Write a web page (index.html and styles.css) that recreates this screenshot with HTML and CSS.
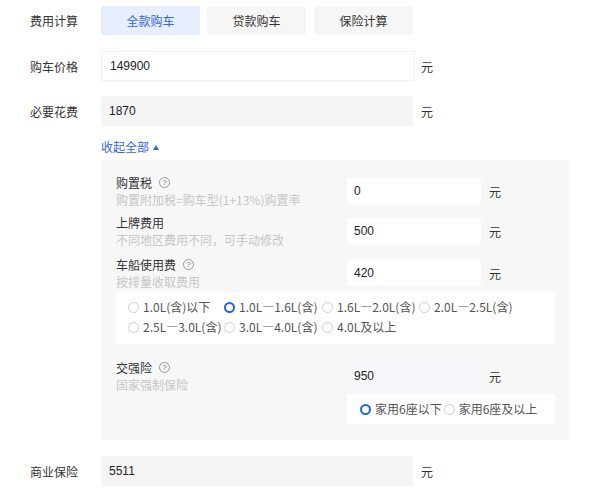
FILE: index.html
```html
<!DOCTYPE html>
<html lang="zh">
<head>
<meta charset="utf-8">
<title>费用计算</title>
<link rel="stylesheet" href="styles.css">
</head>
<body>
<div class="calc">
  <div class="row row-tabs">
    <div class="label">费用计算</div>
    <div class="tabs">
      <div class="tab active">全款购车</div>
      <div class="tab">贷款购车</div>
      <div class="tab tab-last">保险计算</div>
    </div>
  </div>

  <div class="row row-price">
    <div class="label">购车价格</div>
    <div class="field field-white">149900</div>
    <div class="unit">元</div>
  </div>

  <div class="row">
    <div class="label">必要花费</div>
    <div class="field field-grey">1870</div>
    <div class="unit">元</div>
  </div>

  <div class="toggle">收起全部<span class="tri"></span></div>

  <div class="panel">
    <div class="item">
      <div class="desc">
        <div class="title">购置税<span class="help">?</span></div>
        <div class="sub">购置附加税=购车型(1+13%)购置率</div>
      </div>
      <div class="box">0</div>
      <div class="unit">元</div>
    </div>

    <div class="item item-2">
      <div class="desc">
        <div class="title">上牌费用</div>
        <div class="sub">不同地区费用不同，可手动修改</div>
      </div>
      <div class="box">500</div>
      <div class="unit">元</div>
    </div>

    <div class="item item-3">
      <div class="desc">
        <div class="title">车船使用费<span class="help">?</span></div>
        <div class="sub">按排量收取费用</div>
      </div>
      <div class="box">420</div>
      <div class="unit">元</div>
    </div>

    <div class="radios radios-engine">
      <div class="radio"><span class="dot"></span>1.0L(含)以下</div>
      <div class="radio"><span class="dot on"></span>1.0L—1.6L(含)</div>
      <div class="radio"><span class="dot"></span>1.6L—2.0L(含)</div>
      <div class="radio"><span class="dot"></span>2.0L—2.5L(含)</div>
      <div class="radio"><span class="dot"></span>2.5L—3.0L(含)</div>
      <div class="radio"><span class="dot"></span>3.0L—4.0L(含)</div>
      <div class="radio"><span class="dot"></span>4.0L及以上</div>
    </div>

    <div class="item item-4">
      <div class="desc">
        <div class="title">交强险<span class="help">?</span></div>
        <div class="sub">国家强制保险</div>
      </div>
      <div class="col">
        <div class="inline">
          <div class="box box-off">950</div>
          <div class="unit">元</div>
        </div>
        <div class="radios radios-seat">
          <div class="radio"><span class="dot on"></span>家用6座以下</div>
          <div class="radio"><span class="dot"></span>家用6座及以上</div>
        </div>
      </div>
    </div>
  </div>

  <div class="row row-last">
    <div class="label">商业保险</div>
    <div class="field field-grey">5511</div>
    <div class="unit">元</div>
  </div>
</div>
</body>
</html>
```

FILE: styles.css
```css
* { box-sizing: border-box; }

html, body {
  margin: 0;
  padding: 0;
  background: #ffffff;
}

body {
  font-family: "Noto Sans CJK SC", "Noto Sans", sans-serif;
  font-size: 12px;
  color: #333333;
  width: 600px;
  height: 496px;
  overflow: hidden;
}

.calc {
  padding: 6px 0 0 30px;
}

.row {
  display: flex;
  align-items: center;
  height: 30px;
}

.row-tabs {
  height: 29px;
  margin-bottom: 16px;
}

.row-price {
  margin-bottom: 15px;
}

.row-last {
  margin-top: 16px;
}

.label {
  width: 71px;
  flex: none;
  line-height: 17px;
  color: #333333;
}

.tabs {
  display: flex;
  height: 29px;
}

.tab {
  width: 99px;
  height: 29px;
  line-height: 29px;
  text-align: center;
  background: #f6f6f6;
  color: #333333;
  margin-right: 7px;
  border-radius: 2px;
}

.tab-last {
  margin-left: 1px;
}

.tab.active {
  background: #e7eefe;
  color: #3366e0;
}

.field {
  height: 30px;
  line-height: 30px;
  padding-left: 8px;
  color: #222222;
  font-family: "Liberation Sans", "Noto Sans CJK SC", sans-serif;
}

.field-white {
  width: 314px;
  background: #ffffff;
  border: 1px solid #f1f1f1;
  line-height: 28px;
  margin-right: 6px;
}

.field-grey {
  width: 312px;
  background: #f5f5f5;
  margin-right: 8px;
}

.unit {
  line-height: 17px;
  color: #333333;
}

.toggle {
  margin: 8px 0 0 71px;
  height: 26px;
  line-height: 26px;
  color: #3366e0;
  display: flex;
  align-items: center;
}

.tri {
  display: inline-block;
  width: 0;
  height: 0;
  margin-left: 4px;
  border-left: 3px solid transparent;
  border-right: 3px solid transparent;
  border-bottom: 5px solid #3366e0;
}

.panel {
  margin-left: 71px;
  width: 468px;
  height: 280px;
  background: #f7f7f8;
  padding: 14px 15px 16px 15px;
}

.item {
  display: flex;
  align-items: center;
}

.item-2 { margin-top: 6px; }
.item-3 { margin-top: 8px; }

.item-4 {
  margin-top: 15px;
  align-items: flex-start;
}

.desc {
  width: 231px;
  flex: none;
}

.title {
  line-height: 17px;
  color: #333333;
  display: flex;
  align-items: center;
}

.sub {
  line-height: 17px;
  color: #c6c6c6;
}

.help {
  display: inline-block;
  width: 11px;
  height: 11px;
  margin-left: 7px;
  border: 1px solid #999999;
  border-radius: 50%;
  font-family: "Liberation Sans", sans-serif;
  font-size: 8px;
  line-height: 9px;
  text-align: center;
  color: #777777;
}

.box {
  width: 134px;
  height: 26px;
  line-height: 26px;
  padding-left: 7px;
  background: #ffffff;
  border-radius: 2px;
  margin-right: 8px;
  color: #222222;
  font-family: "Liberation Sans", "Noto Sans CJK SC", sans-serif;
}

.box-off {
  background: #f7f8fb;
}

.col {
  margin-top: 4px;
}

.inline {
  display: flex;
  align-items: center;
}

.radios {
  background: #ffffff;
  color: #555555;
}

.radios-engine {
  margin-top: 2px;
  width: 439px;
  height: 52px;
  padding: 5px 0 0 12px;
  display: grid;
  grid-template-columns: 96px 98px 97px auto;
  grid-auto-rows: 20px;
}

.radios-seat {
  margin-top: 5px;
  width: 208px;
  height: 30px;
  padding-left: 13px;
  display: flex;
  align-items: center;
}

.radio {
  display: flex;
  align-items: center;
  white-space: nowrap;
  line-height: 20px;
}

.radios-seat .radio {
  margin-right: 2px;
}

.dot {
  display: inline-block;
  width: 11px;
  height: 11px;
  border: 1px solid #cfcfcf;
  border-radius: 50%;
  margin-right: 4px;
  flex: none;
  background: #ffffff;
}

.dot.on {
  border: 2px solid #1f63e6;
}
```
